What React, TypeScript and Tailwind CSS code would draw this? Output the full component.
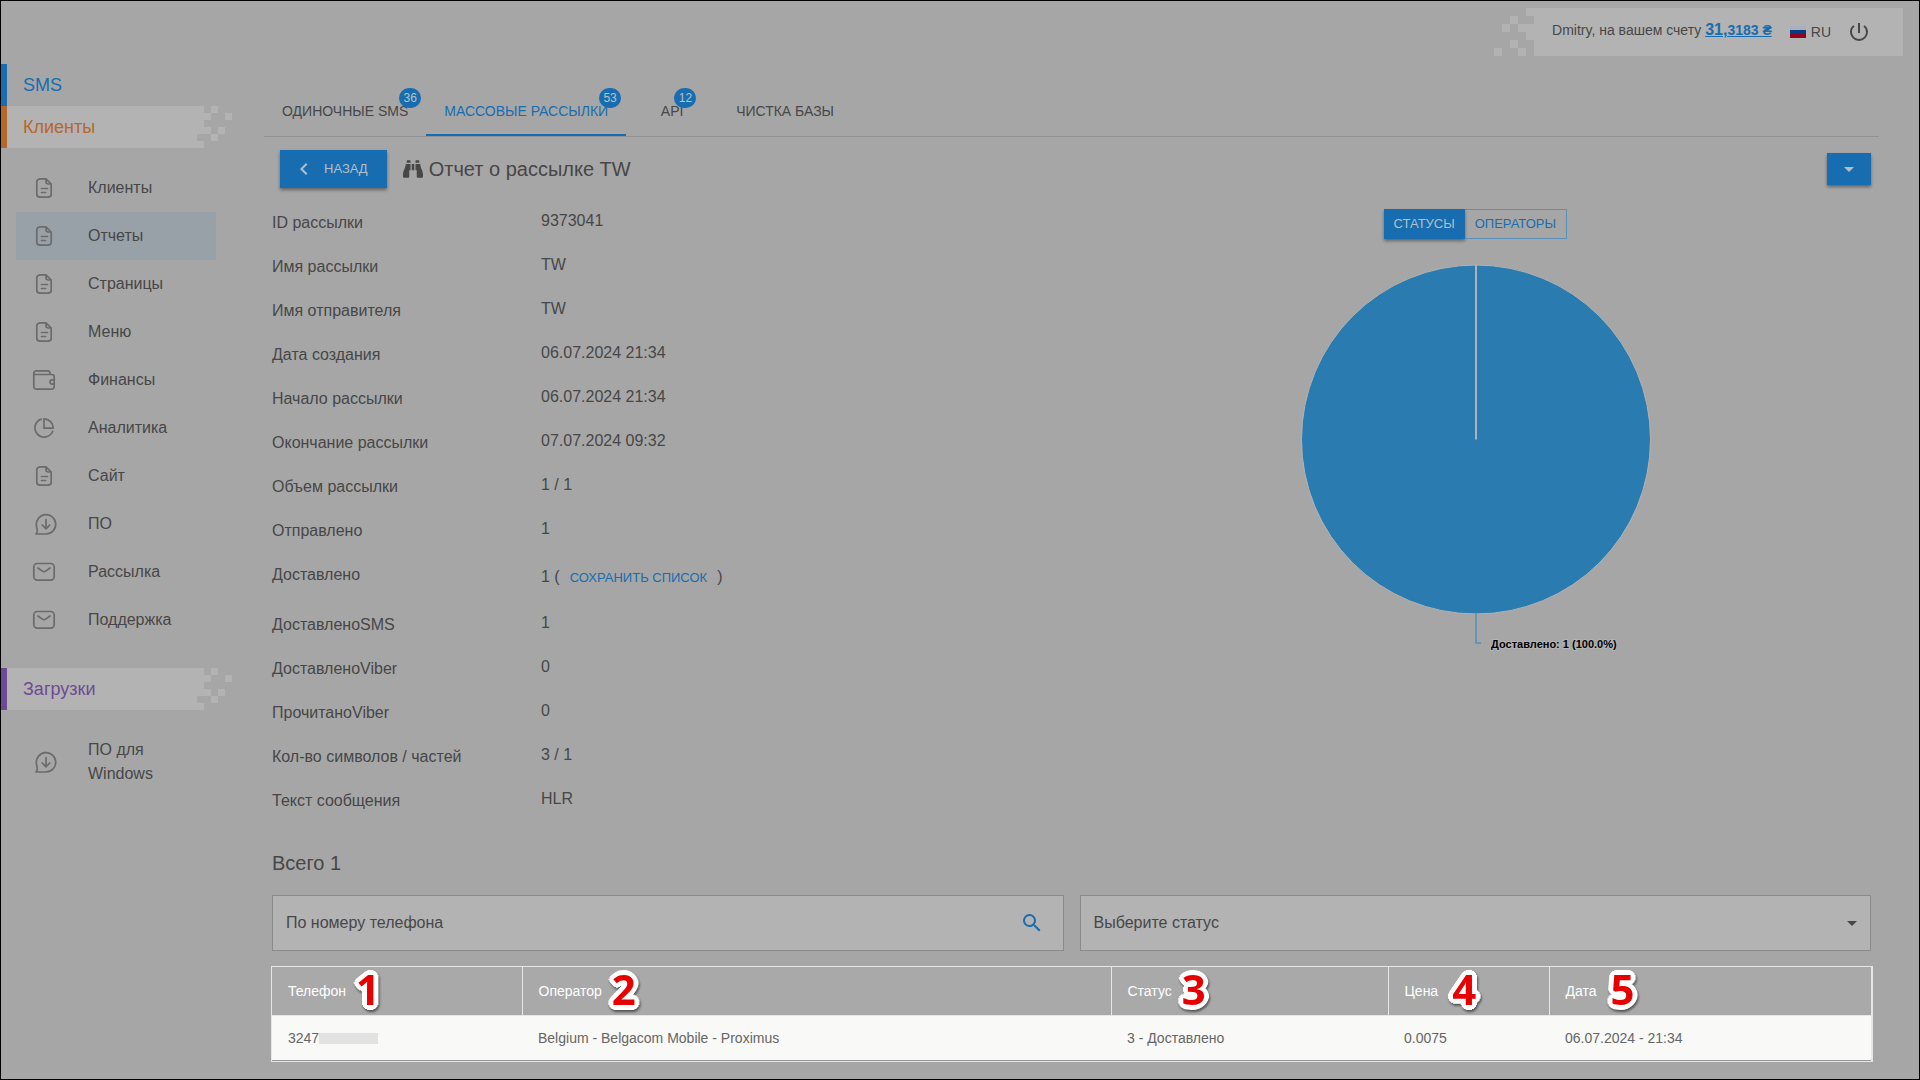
import { useState } from 'react'
import type { ReactNode } from 'react'
import { FaBinoculars } from 'react-icons/fa'
import { MdArrowDropDown, MdChevronLeft, MdPowerSettingsNew, MdSearch } from 'react-icons/md'

type IconName = 'file' | 'wallet' | 'pie' | 'download' | 'mail'

interface NavItem {
  label: string
  icon: IconName
}

const CLIENT_ITEMS: NavItem[] = [
  { label: 'Клиенты', icon: 'file' },
  { label: 'Отчеты', icon: 'file' },
  { label: 'Страницы', icon: 'file' },
  { label: 'Меню', icon: 'file' },
  { label: 'Финансы', icon: 'wallet' },
  { label: 'Аналитика', icon: 'pie' },
  { label: 'Сайт', icon: 'file' },
  { label: 'ПО', icon: 'download' },
  { label: 'Рассылка', icon: 'mail' },
  { label: 'Поддержка', icon: 'mail' },
]

const DOWNLOAD_ITEMS: NavItem[] = [{ label: 'ПО для Windows', icon: 'download' }]

const TABS = [
  { label: 'ОДИНОЧНЫЕ SMS', count: 36 },
  { label: 'МАССОВЫЕ РАССЫЛКИ', count: 53 },
  { label: 'API', count: 12 },
  { label: 'ЧИСТКА БАЗЫ' },
]

const DETAILS = [
  { label: 'ID рассылки', value: '9373041' },
  { label: 'Имя рассылки', value: 'TW' },
  { label: 'Имя отправителя', value: 'TW' },
  { label: 'Дата создания', value: '06.07.2024 21:34' },
  { label: 'Начало рассылки', value: '06.07.2024 21:34' },
  { label: 'Окончание рассылки', value: '07.07.2024 09:32' },
  { label: 'Объем рассылки', value: '1 / 1' },
  { label: 'Отправлено', value: '1' },
  { label: 'Доставлено', value: '1', exportable: true },
  { label: 'ДоставленоSMS', value: '1' },
  { label: 'ДоставленоViber', value: '0' },
  { label: 'ПрочитаноViber', value: '0' },
  { label: 'Кол-во символов / частей', value: '3 / 1' },
  { label: 'Текст сообщения', value: 'HLR' },
]

const COLUMNS = [
  { label: 'Телефон', width: 'w-[250px]', gap: 'gap-[10px]' },
  { label: 'Оператор', width: 'w-[589px]', gap: 'gap-[10px]' },
  { label: 'Статус', width: 'w-[277px]', gap: 'gap-[10px]' },
  { label: 'Цена', width: 'w-[161px]', gap: 'gap-[14px]' },
  { label: 'Дата', width: '', gap: 'gap-[14px]' },
]

function NavIcon({ name }: { name: IconName }) {
  return (
    <svg width="26" height="24" viewBox="0 0 26 24" fill="none" stroke="#6b6b6b" strokeWidth="1.700" strokeLinecap="round" strokeLinejoin="round" className="shrink-0">
      {name === 'file' && (
        <>
          <path d="M15 2.800H9A3.200 3.200 0 0 0 5.800 6v12A3.200 3.200 0 0 0 9 21.200h8a3.200 3.200 0 0 0 3.200-3.200V8L15 2.800v3A2.200 2.200 0 0 0 17.200 8h3" />
          <path d="M10.500 12.500h6M10.500 16.500h4" />
        </>
      )}
      {name === 'wallet' && (
        <>
          <path d="M2.800 6.500v12.300a2.400 2.400 0 0 0 2.400 2.400h15.600a2.400 2.400 0 0 0 2.400-2.400V8.900a2.400 2.400 0 0 0-2.400-2.400H2.800V5.200a2.400 2.400 0 0 1 2.400-2.400h11.400A2.400 2.400 0 0 1 19 5.200v1.300" />
          <path d="M23.200 11.800h-2a2.200 2.200 0 0 0 0 4.400h2" />
        </>
      )}
      {name === 'pie' && (
        <>
          <path d="M10.300 3.100A9.200 9.200 0 1 0 21.700 15.300" />
          <path d="M13 2.800V12.200H22.200A9.300 9.300 0 0 0 13 2.800z" />
        </>
      )}
      {name === 'download' && (
        <>
          <path d="M5 22h10a9.700 9.700 0 1 0-9.500-7.800c.300 1.500.900 3.600.700 5.300-.100 1-.500 2-1.200 2.500z" />
          <path d="M15 7.500v9M11.200 13l3.800 3.800 3.800-3.800" />
        </>
      )}
      {name === 'mail' && (
        <>
          <rect x="2.800" y="3.500" width="20.400" height="16.600" rx="3.500" />
          <path d="M7 8l4.400 3.100a2.800 2.800 0 0 0 3.200 0L19 8" />
        </>
      )}
    </svg>
  )
}

// Dissolving pixel edge on the right side of a section heading
function PixelEdge() {
  return (
    <svg width="35" height="42" viewBox="0 0 5 6" fill="#b3b3b3" shapeRendering="crispEdges">
      <path d="M0 0h1v4h-1zM0 5h1v1h-1zM1 1h1v1h-1zM1 3h1v1h-1zM2 0h1v1h-1zM2 4h1v1h-1zM3 3h1v1h-1zM4 1h1v1h-1z" />
    </svg>
  )
}

function NavHeading({ bar, text, plain, children }: { bar: string; text: string; plain?: boolean; children: ReactNode }) {
  return (
    <h2 className={`flex h-[42px] border-l-[6px] text-lg ${bar}`}>
      <a href="#" className={`flex w-[190px] items-center pl-4 ${text} ${plain ? '' : 'bg-[#b3b3b3]'}`}>{children}</a>
      {!plain && <PixelEdge />}
    </h2>
  )
}

function NavList({ items, active }: { items: NavItem[]; active?: string }) {
  return (
    <ul className="py-4 pl-[15px]">
      {items.map((item) => (
        <li key={item.label}>
          <a
            href="#"
            className={`flex w-[200px] items-center gap-[31px] py-3 pr-14 pl-[15px] leading-6 ${item.label === active ? 'bg-[#99a1a8]' : ''}`}
          >
            <NavIcon name={item.icon} />
            <span>{item.label}</span>
          </a>
        </li>
      ))}
    </ul>
  )
}

function Header() {
  return (
    <header className="flex h-[63px] justify-end pt-[7px] pr-4">
      <svg width="40" height="48" viewBox="0 0 5 6" fill="#b3b3b3" shapeRendering="crispEdges">
        <path d="M4 0h1v1h-1zM2 1h1v1h-1zM1 2h1v1h-1zM3 2h2v1h-2zM4 3h1v1h-1zM2 4h1v1h-1zM0 5h1v1h-1zM3 5h1v1h-1z" />
      </svg>
      <div className="flex h-12 items-center bg-[#b3b3b3] pr-8 pl-[18px] text-sm">
        <span className="pb-1">
          Dmitry, на вашем счету{' '}
          <a href="#" className="font-bold text-[#176db0] underline">
            <span className="text-base">31,</span>3183 ₴
          </a>
        </span>
        <button className="ml-[18px] flex cursor-pointer items-center gap-[5px]">
          <span className="flex h-3 w-4 flex-col">
            <span className="flex-1 bg-[#a9b0bb]" />
            <span className="flex-1 bg-[#063c80]" />
            <span className="flex-1 bg-[#95001f]" />
          </span>
          RU
        </button>
        <button aria-label="Выход" className="ml-4 cursor-pointer">
          <MdPowerSettingsNew size={24} />
        </button>
      </div>
    </header>
  )
}

function Tabs() {
  const [active, setActive] = useState(1)
  return (
    <div role="tablist" className="flex border-b border-[#919191] text-sm">
      {TABS.map((tab, i) => (
        <button
          key={tab.label}
          role="tab"
          aria-selected={i === active}
          onClick={() => setActive(i)}
          className={`h-12 min-w-[92px] cursor-pointer border-b-2 px-[18px] ${i === active ? 'border-[#176db0] text-[#176db0]' : 'border-transparent'}`}
        >
          <span className="relative">
            {tab.label}
            {tab.count && (
              <span className="absolute -top-[15px] -right-[13px] flex h-5 w-[22px] items-center justify-center rounded-full bg-[#176db0] text-xs text-[#c0c0c0]">
                {tab.count}
              </span>
            )}
          </span>
        </button>
      ))}
    </div>
  )
}

function PieChart() {
  return (
    <svg width="440" height="400" viewBox="0 0 440 400" className="mt-5">
      <circle cx="221" cy="180.500" r="174.500" fill="#297bb0" stroke="#b3b3b3" />
      <path d="M221 6v174.500" stroke="#a9b3ba" strokeWidth="2" />
      <path d="M221 355v29h5" fill="none" stroke="#6495b6" strokeWidth="2" />
      <text x="236" y="389" fontSize="11" fontWeight="bold" fill="#000" stroke="#b3b3b3" strokeWidth="2" paintOrder="stroke">
        Доставлено: 1 (100.0%)
      </text>
    </svg>
  )
}

function Details() {
  return (
    <dl>
      {DETAILS.map((row) => (
        <div key={row.label} className={`grid grid-cols-[269px_1fr] leading-6 ${row.exportable ? 'h-[50px]' : 'h-11'}`}>
          <dt className="pt-[10px]">{row.label}</dt>
          {row.exportable ? (
            <dd className="pt-3">
              {row.value} (<button className="cursor-pointer px-[10px] text-[13px] text-[#176db0]">СОХРАНИТЬ СПИСОК</button>)
            </dd>
          ) : (
            <dd className="pt-2">{row.value}</dd>
          )}
        </div>
      ))}
    </dl>
  )
}

// Red number with a thick rounded white outline
function Marker({ children }: { children: ReactNode }) {
  return (
    <span className="pb-1 font-['Open_Sans',sans-serif] text-[42px] leading-[48px] font-bold text-[#e60000] drop-shadow-[1px_2px_1px_rgba(0,0,0,0.5)] [text-shadow:5px_0_#fff,-5px_0_#fff,0_5px_#fff,0_-5px_#fff,4px_2px_#fff,4px_-2px_#fff,-4px_2px_#fff,-4px_-2px_#fff,3px_3px_#fff,3px_-3px_#fff,-3px_3px_#fff,-3px_-3px_#fff,2px_4px_#fff,2px_-4px_#fff,-2px_4px_#fff,-2px_-4px_#fff]">
      {children}
    </span>
  )
}

function Results() {
  return (
    <div className="mt-[15px] -mr-[2px] -ml-px border border-r-2 border-[#e6e6e6] bg-[#f9f9f7]">
      <table className="w-full table-fixed border-b border-[#999] text-left text-sm">
        <thead className="border-b border-[#e6e6e6] bg-[#a9a9a9] text-white">
          <tr>
            {COLUMNS.map((col, i) => (
              <th key={col.label} className={`border-r border-[#e6e6e6] p-0 pl-4 font-normal last:border-r-0 ${col.width}`}>
                <div className={`flex h-12 items-center ${col.gap}`}>
                  {col.label}
                  <Marker>{i + 1}</Marker>
                </div>
              </th>
            ))}
          </tr>
        </thead>
        <tbody className="text-[#666]">
          <tr className="h-[45px]">
            <td className="pl-4">
              <div className="flex items-center">
                3247
                <span className="h-[11px] w-[59px] bg-[#e2e2e2]" />
              </div>
            </td>
            <td className="pl-4">Belgium - Belgacom Mobile - Proximus</td>
            <td className="pl-4">3 - Доставлено</td>
            <td className="pl-4">0.0075</td>
            <td className="pl-4">06.07.2024 - 21:34</td>
          </tr>
        </tbody>
      </table>
    </div>
  )
}

export default function App() {
  const [phone, setPhone] = useState('')

  return (
    <div className="flex min-h-screen flex-col border border-black bg-[#a6a6a6] font-['Liberation_Sans',Arial,sans-serif] text-base text-[#474747]">
      <Header />
      <div className="flex flex-1">
        <nav className="w-[263px] shrink-0">
          <NavHeading bar="border-[#176db0]" text="text-[#176db0]" plain>SMS</NavHeading>
          <NavHeading bar="border-[#b5682c]" text="text-[#b5682c]">Клиенты</NavHeading>
          <NavList items={CLIENT_ITEMS} active="Отчеты" />
          <div className="h-2" />
          <NavHeading bar="border-[#6f4a94]" text="text-[#6f4a94]">Загрузки</NavHeading>
          <NavList items={DOWNLOAD_ITEMS} />
        </nav>

        <main className="mr-10 min-w-0 flex-1 pt-6">
          <Tabs />
          <div className="px-2">
            <div className="mt-[13px] flex items-center pl-2">
              <button className="flex h-[38px] cursor-pointer items-center gap-2 bg-[#176db0] pr-[19px] pl-3 text-[13px] text-[#b5bfc7] shadow-[0_2px_3px_rgba(0,0,0,0.4)]">
                <MdChevronLeft size={24} />
                НАЗАД
              </button>
              <h1 className="ml-4 flex items-center gap-[6px] text-xl">
                <FaBinoculars size={20} />
                Отчет о рассылке TW
              </h1>
              <button aria-label="Действия" className="ml-auto flex h-8 w-11 cursor-pointer items-center justify-center bg-[#176db0] text-[#b5bfc7] shadow-[0_2px_3px_rgba(0,0,0,0.4)]">
                <MdArrowDropDown size={24} />
              </button>
            </div>

            <div className="mt-[13px] grid grid-cols-2 gap-4">
              <Details />
              <div className="flex flex-col items-center pt-2">
                <div className="flex h-[30px] text-[13px]">
                  <button className="cursor-pointer bg-[#176db0] px-[10px] text-[#b5bfc7] shadow-[0_2px_3px_rgba(0,0,0,0.4)]">СТАТУСЫ</button>
                  <button className="cursor-pointer border border-l-0 border-[#5a8fb8] px-[10px] text-[#176db0]">ОПЕРАТОРЫ</button>
                </div>
                <PieChart />
              </div>
            </div>

            <h2 className="mt-[26px] text-xl">Всего 1</h2>

            <div className="mt-[18px] grid grid-cols-2 gap-4">
              <div className="flex h-14 items-center border border-[#8a8a8a] bg-[#b3b3b3] pr-[19px] pl-[13px]">
                <input
                  aria-label="По номеру телефона"
                  placeholder="По номеру телефона"
                  value={phone}
                  onChange={(e) => setPhone(e.target.value)}
                  className="min-w-0 flex-1 bg-transparent outline-none placeholder:text-[#474747]"
                />
                <button aria-label="Найти" className="cursor-pointer text-[#176db0]">
                  <MdSearch size={24} />
                </button>
              </div>
              <div className="relative">
                <select aria-label="Статус" className="h-14 w-full appearance-none border border-[#8a8a8a] bg-[#b3b3b3] pr-10 pl-[13px] outline-none">
                  <option>Выберите статус</option>
                </select>
                <MdArrowDropDown size={24} className="pointer-events-none absolute top-4 right-[7px]" />
              </div>
            </div>

            <Results />
          </div>
        </main>
      </div>
    </div>
  )
}
